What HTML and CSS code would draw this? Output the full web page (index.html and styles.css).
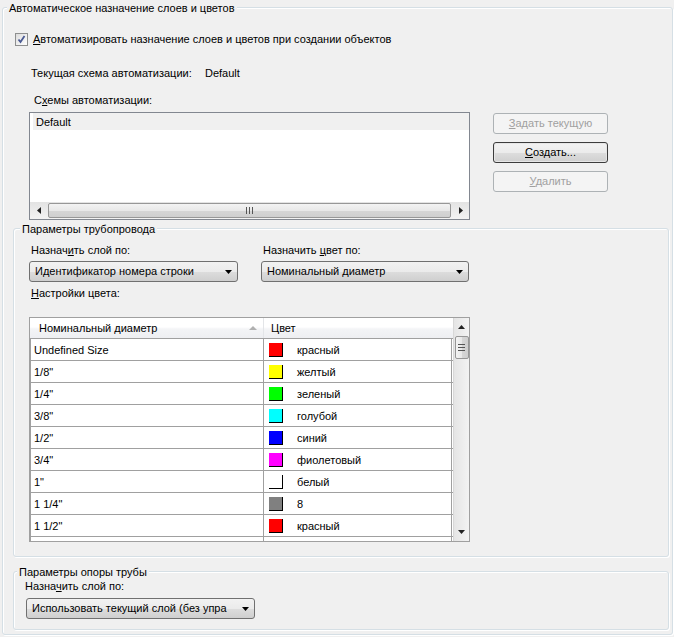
FILE: index.html
```html
<!DOCTYPE html>
<html lang="ru">
<head>
<meta charset="utf-8">
<title>Автоматическое назначение слоев и цветов</title>
<link rel="stylesheet" href="styles.css">
</head>
<body>
<fieldset class="grp outer">
  <legend class="lg lg-outer">Автоматическое назначение слоев и цветов</legend>

  <div class="chkrow">
    <span class="chk">
      <svg width="11" height="11" viewBox="0 0 11 11"><path d="M2.5 5.5 L4.5 8 L8.5 2" fill="none" stroke="#4a5a93" stroke-width="1.8"/></svg>
    </span>
    <span class="chk-lbl"><u>А</u>втоматизировать назначение слоев и цветов при создании объектов</span>
  </div>

  <div class="cur">
    <span class="cur-lbl">Текущая схема автоматизации:</span><span>Default</span>
  </div>

  <div class="schemes-lbl">С<u>х</u>емы автоматизации:</div>

  <div class="schemes">
    <div class="listbox">
      <div class="lb-items">
        <div class="lb-item">Default</div>
      </div>
      <div class="hscroll">
        <span class="sb-btn"><svg width="4" height="7" viewBox="0 0 4 7"><path d="M4 0 L0 3.5 L4 7Z" fill="#222"/></svg></span>
        <span class="hthumb"><svg width="7" height="7" viewBox="0 0 7 7"><path d="M0.5 0v7M3.5 0v7M6.5 0v7" stroke="#555" stroke-width="1"/></svg></span>
        <span class="sb-btn"><svg width="4" height="7" viewBox="0 0 4 7"><path d="M0 0 L4 3.5 L0 7Z" fill="#222"/></svg></span>
      </div>
    </div>
    <div class="btns">
      <div class="btn dis"><u>З</u>адать текущую</div>
      <div class="btn def"><u>С</u>оздать...</div>
      <div class="btn dis"><u>У</u>далить</div>
    </div>
  </div>

  <fieldset class="grp pipe">
    <legend class="lg lg-pipe">Параметры трубопровода</legend>
    <div class="assign">
      <div class="field f1">
        <div class="lbl">Назнач<u>и</u>ть слой по:</div>
        <div class="combo"><span class="combo-txt">Идентификатор номера строки</span><span class="combo-arr"><svg width="7" height="4" viewBox="0 0 7 4"><path d="M0 0H7L3.5 4Z" fill="#000"/></svg></span></div>
      </div>
      <div class="field f2">
        <div class="lbl">Назначить <u>ц</u>вет по:</div>
        <div class="combo"><span class="combo-txt">Номинальный диаметр</span><span class="combo-arr"><svg width="7" height="4" viewBox="0 0 7 4"><path d="M0 0H7L3.5 4Z" fill="#000"/></svg></span></div>
      </div>
    </div>
    <div class="lbl colors-lbl"><u>Н</u>астройки цвета:</div>

    <div class="grid">
      <div class="grid-main">
        <div class="ghead">
          <div class="hc c1"><span>Номинальный диаметр</span><svg class="sort" width="8" height="4" viewBox="0 0 8 4"><path d="M0 4H8L4 0Z" fill="#b0b0b0"/></svg></div>
          <div class="hc c2">Цвет</div>
        </div>
        <div class="row"><div class="cell c1">Undefined Size</div><div class="cell c2"><span class="sw" style="background:#ff0000"></span>красный</div></div>
        <div class="row"><div class="cell c1">1/8"</div><div class="cell c2"><span class="sw" style="background:#ffff00"></span>желтый</div></div>
        <div class="row"><div class="cell c1">1/4"</div><div class="cell c2"><span class="sw" style="background:#00ff00"></span>зеленый</div></div>
        <div class="row"><div class="cell c1">3/8"</div><div class="cell c2"><span class="sw" style="background:#00ffff"></span>голубой</div></div>
        <div class="row"><div class="cell c1">1/2"</div><div class="cell c2"><span class="sw" style="background:#0000ff"></span>синий</div></div>
        <div class="row"><div class="cell c1">3/4"</div><div class="cell c2"><span class="sw" style="background:#ff00ff"></span>фиолетовый</div></div>
        <div class="row"><div class="cell c1">1"</div><div class="cell c2"><span class="sw" style="background:#ffffff"></span>белый</div></div>
        <div class="row"><div class="cell c1">1 1/4"</div><div class="cell c2"><span class="sw" style="background:#808080"></span>8</div></div>
        <div class="row"><div class="cell c1">1 1/2"</div><div class="cell c2"><span class="sw" style="background:#ff0000"></span>красный</div></div>
        <div class="row"><div class="cell c1"></div><div class="cell c2"></div></div>
      </div>
      <div class="vscroll">
        <span class="vbtn"><svg width="7" height="4" viewBox="0 0 7 4"><path d="M0 4H7L3.5 0Z" fill="#222"/></svg></span>
        <span class="vthumb"><svg width="7" height="7" viewBox="0 0 7 7"><path d="M0 0.5h7M0 3.5h7M0 6.5h7" stroke="#555" stroke-width="1"/></svg></span>
        <span class="vtrack"></span>
        <span class="vbtn"><svg width="7" height="4" viewBox="0 0 7 4"><path d="M0 0H7L3.5 4Z" fill="#222"/></svg></span>
      </div>
    </div>
  </fieldset>

  <fieldset class="grp support">
    <legend class="lg lg-sup">Параметры опоры трубы</legend>
    <div class="lbl sup-lbl">Назна<u>ч</u>ить слой по:</div>
    <div class="combo sup-combo"><span class="combo-txt">Использовать текущий слой (без упра</span><span class="combo-arr"><svg width="7" height="4" viewBox="0 0 7 4"><path d="M0 0H7L3.5 4Z" fill="#000"/></svg></span></div>
  </fieldset>
</fieldset>
</body>
</html>
```

FILE: styles.css
```css
html, body {
  margin: 0;
  padding: 0;
  background: #f0f0f0;
}
body {
  width: 674px;
  height: 637px;
  overflow: hidden;
  font-family: "Liberation Sans", Arial, sans-serif;
  font-size: 11px;
  line-height: 13px;
  color: #000;
}
u { text-decoration: underline; text-underline-offset: 1px; }

.grp {
  margin: 0;
  padding: 0;
  border: 1px solid #d5dfe5;
  border-radius: 3px;
  box-shadow: inset 1px 1px 0 #fff, 1px 1px 0 #fff;
  min-width: 0;
}
.lg {
  padding: 1px 2px 0;
  background: #f0f0f0;
  line-height: 13px;
  height: 13px;
  box-sizing: border-box;
}
.outer {
  margin: 1px 1px 2px 2px;
  padding-bottom: 4px;
}
.lg-outer { margin-left: 4px; }

.chkrow {
  display: flex;
  align-items: center;
  margin: 19px 0 0 12px;
  height: 13px;
}
.chk {
  width: 11px;
  height: 11px;
  border: 1px solid #8e8f8f;
  background: linear-gradient(135deg, #dcdcdc, #ffffff);
  display: flex;
  align-items: center;
  justify-content: center;
}
.chk-lbl { margin-left: 5px; }

.cur {
  margin: 21px 0 0 28px;
  display: flex;
}
.cur-lbl { width: 174px; }

.schemes-lbl { margin: 14px 0 0 31px; }

.schemes {
  display: flex;
  margin: 5px 0 0 26px;
}
.listbox {
  width: 439px;
  height: 106px;
  border: 1px solid #828790;
  background: #fff;
  display: flex;
  flex-direction: column;
}
.lb-items { flex: 1; padding-left: 3px; }
.lb-item {
  height: 17px;
  line-height: 17px;
  background: #f0f0f0;
  padding: 1px 0 0 3px;
  box-sizing: border-box;
}
.hscroll {
  height: 17px;
  display: flex;
  align-items: center;
  background: linear-gradient(#e3e3e3, #f3f3f3);
}
.sb-btn {
  width: 17px;
  height: 17px;
  display: flex;
  align-items: center;
  justify-content: center;
}
.hthumb {
  flex: 1;
  height: 13px;
  margin: 0 1px;
  border: 1px solid #979797;
  border-radius: 2px;
  background: linear-gradient(#f3f3f3, #e8e8e8 50%, #d6d6d6 51%, #cfcfcf);
  display: flex;
  align-items: center;
  justify-content: center;
}
.btns {
  margin: 1px 0 0 23px;
  display: flex;
  flex-direction: column;
  gap: 8px;
}
.btn {
  width: 113px;
  height: 19px;
  line-height: 19px;
  text-align: center;
  border: 1px solid #707070;
  border-radius: 3px;
  background: linear-gradient(#f2f2f2, #ebebeb 50%, #dddddd 51%, #cfcfcf);
}
.btn.def { border-color: #3c3c3c; box-shadow: inset 0 0 0 1px #e6e6e6; }
.btn.dis {
  color: #a0a0a0;
  border-color: #adb2b5;
  background: #f4f4f4;
}

.pipe {
  margin: 2px 3px 0 10px;
  padding-bottom: 14px;
}
.lg-pipe { margin-left: 6px; }

.assign {
  display: flex;
  margin: 9px 0 0 15px;
  gap: 23px;
}
.field.f1 { width: 209px; }
.field.f2 { width: 208px; }
.lbl { padding-left: 2px; }
.field .combo { margin-top: 4px; }

.combo {
  height: 19px;
  border: 1px solid #707070;
  border-radius: 3px;
  background: linear-gradient(#f2f2f2, #ebebeb 50%, #dddddd 51%, #cfcfcf);
  display: flex;
  align-items: center;
}
.combo-txt {
  flex: 1;
  padding-left: 5px;
  white-space: nowrap;
  overflow: hidden;
}
.combo-arr {
  width: 17px;
  display: flex;
  align-items: center;
  justify-content: center;
}

.colors-lbl { margin: 5px 0 0 17px; padding-left: 0; }

.grid {
  margin: 17px 0 0 15px;
  width: 439px;
  height: 223px;
  border: 1px solid #a0a0a0;
  background: #fff;
  display: flex;
}
.grid-main {
  width: 423px;
  height: 223px;
  overflow: hidden;
}
.ghead {
  display: flex;
  height: 20px;
  border-bottom: 1px solid #a0a0a0;
  background: linear-gradient(#ffffff, #ffffff 45%, #f3f4f6 55%, #eeeff2);
}
.hc {
  display: flex;
  align-items: center;
  height: 20px;
  padding-top: 1px;
  box-sizing: border-box;
}
.hc.c1 {
  width: 234px;
  padding-left: 9px;
  border-right: 1px solid #e3e5e8;
  justify-content: space-between;
  padding-right: 6px;
}
.hc.c2 { padding-left: 7px; }
.sort { margin-top: -1px; }

.row {
  display: flex;
  height: 21px;
  border-bottom: 1px solid #a0a0a0;
  border-left: 1px solid #a0a0a0;
}
.cell {
  display: flex;
  align-items: center;
  height: 21px;
  padding-top: 1px;
  box-sizing: border-box;
  white-space: nowrap;
}
.cell.c1 {
  width: 233px;
  padding-left: 3px;
  border-right: 1px solid #a0a0a0;
}
.cell.c2 {
  width: 188px;
  padding-left: 5px;
  border-right: 1px solid #a0a0a0;
}
.sw {
  width: 14px;
  height: 14px;
  box-sizing: border-box;
  border-right: 1px solid #000;
  border-bottom: 1px solid #000;
  margin: -1px 14px 0 0;
  flex: none;
}

.vscroll {
  width: 16px;
  height: 223px;
  display: flex;
  flex-direction: column;
  align-items: center;
  background: linear-gradient(to right, #e5e5e5, #f3f3f3);
  border-left: 1px solid #d8d8d8;
  box-sizing: border-box;
}
.vbtn {
  width: 15px;
  height: 18px;
  display: flex;
  align-items: center;
  justify-content: center;
  flex: none;
}
.vthumb {
  width: 12px;
  height: 21px;
  border: 1px solid #979797;
  border-radius: 2px;
  background: linear-gradient(to right, #f3f3f3, #e8e8e8 50%, #d6d6d6 51%, #cfcfcf);
  display: flex;
  align-items: center;
  justify-content: center;
  flex: none;
}
.vtrack { flex: 1; }

.support {
  margin: 8px 3px 0 10px;
  padding-bottom: 10px;
}
.lg-sup { margin-left: 3px; }
.sup-lbl { margin: 2px 0 0 9px; }
.sup-combo {
  margin: 5px 0 0 12px;
  width: 227px;
}
```
